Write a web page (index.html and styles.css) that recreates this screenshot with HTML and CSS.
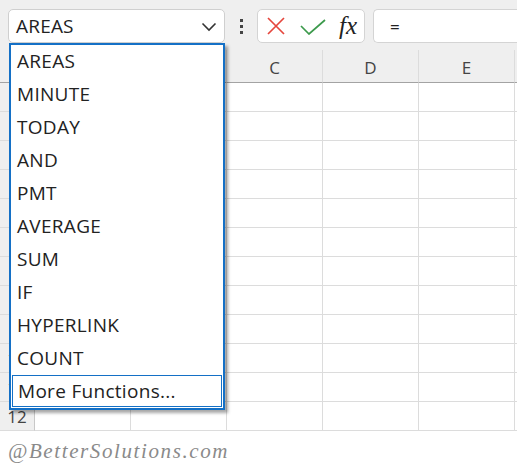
FILE: index.html
```html
<!DOCTYPE html>
<html>
<head>
<meta charset="utf-8">
<link rel="stylesheet" href="styles.css">
</head>
<body>
<div class="page">
  <div class="toolbar">
    <div class="namebox">
      <span class="name">AREAS</span>
      <svg class="chev" width="16" height="10" viewBox="0 0 16 10"><path d="M1.5 1.5 L8 8 L14.5 1.5" fill="none" stroke="#333" stroke-width="1.6"/></svg>
    </div>
    <div class="dots"><span></span><span></span><span></span></div>
    <div class="fbtns">
      <svg class="ico-x" width="20" height="20" viewBox="0 0 20 20"><path d="M2 2 L18 18 M18 2 L2 18" stroke="#e5463d" stroke-width="1.7" fill="none"/></svg>
      <svg class="ico-ok" width="26" height="16" viewBox="0 0 26 16"><path d="M1 7 L9 15 L25 1" stroke="#3c9a4c" stroke-width="1.7" fill="none"/></svg>
      <span class="fx">fx</span>
    </div>
    <div class="fbar"><span class="eq">=</span></div>
  </div>

  <div class="grid">
    <div class="hc corner"></div><div class="hc">A</div><div class="hc">B</div><div class="hc">C</div><div class="hc">D</div><div class="hc">E</div><div class="hc"></div>
    <div class="rh">1</div><div class="c"></div><div class="c"></div><div class="c"></div><div class="c"></div><div class="c"></div><div class="c"></div>
    <div class="rh">2</div><div class="c"></div><div class="c"></div><div class="c"></div><div class="c"></div><div class="c"></div><div class="c"></div>
    <div class="rh">3</div><div class="c"></div><div class="c"></div><div class="c"></div><div class="c"></div><div class="c"></div><div class="c"></div>
    <div class="rh">4</div><div class="c"></div><div class="c"></div><div class="c"></div><div class="c"></div><div class="c"></div><div class="c"></div>
    <div class="rh">5</div><div class="c"></div><div class="c"></div><div class="c"></div><div class="c"></div><div class="c"></div><div class="c"></div>
    <div class="rh">6</div><div class="c"></div><div class="c"></div><div class="c"></div><div class="c"></div><div class="c"></div><div class="c"></div>
    <div class="rh">7</div><div class="c"></div><div class="c"></div><div class="c"></div><div class="c"></div><div class="c"></div><div class="c"></div>
    <div class="rh">8</div><div class="c"></div><div class="c"></div><div class="c"></div><div class="c"></div><div class="c"></div><div class="c"></div>
    <div class="rh">9</div><div class="c"></div><div class="c"></div><div class="c"></div><div class="c"></div><div class="c"></div><div class="c"></div>
    <div class="rh">10</div><div class="c"></div><div class="c"></div><div class="c"></div><div class="c"></div><div class="c"></div><div class="c"></div>
    <div class="rh">11</div><div class="c"></div><div class="c"></div><div class="c"></div><div class="c"></div><div class="c"></div><div class="c"></div>
    <div class="rh">12</div><div class="c"></div><div class="c"></div><div class="c"></div><div class="c"></div><div class="c"></div><div class="c"></div>
  </div>

  <div class="watermark">@BetterSolutions.com</div>

  <ul class="dropdown">
    <li>AREAS</li>
    <li>MINUTE</li>
    <li>TODAY</li>
    <li>AND</li>
    <li>PMT</li>
    <li>AVERAGE</li>
    <li>SUM</li>
    <li>IF</li>
    <li>HYPERLINK</li>
    <li>COUNT</li>
    <li class="more">More Functions...</li>
  </ul>
</div>
</body>
</html>
```

FILE: styles.css
```css
* { box-sizing: border-box; }
html, body { margin: 0; padding: 0; }
body {
  width: 517px;
  height: 465px;
  overflow: hidden;
  background: #fff;
  font-family: "Open Sans", "Noto Sans", sans-serif;
  color: #222;
}
.page { position: relative; width: 517px; height: 465px; overflow: hidden; }

.toolbar {
  height: 50px;
  background: #efefef;
  display: flex;
  align-items: flex-start;
  padding: 9px 0 0 8px;
}
.namebox {
  width: 217px;
  height: 34px;
  background: #fff;
  border: 1px solid #cfcfcf;
  border-radius: 5px;
  display: flex;
  align-items: center;
  justify-content: space-between;
  padding: 0 7px 0 7px;
}
.name { font-size: 19px; line-height: 1; color: #222; letter-spacing: 0.2px; }
.chev { margin-top: 1px; }
.dots {
  width: 32px;
  height: 34px;
  display: flex;
  flex-direction: column;
  align-items: center;
  justify-content: center;
  gap: 3px;
}
.dots span { width: 3px; height: 3px; background: #444; display: block; }
.fbtns {
  width: 108px;
  height: 34px;
  background: #fff;
  border: 1px solid #d4d4d4;
  border-radius: 5px;
  display: flex;
  align-items: center;
  padding-left: 8px;
}
.ico-x { margin-right: 14px; }
.ico-ok { margin-right: 13px; margin-top: 1px; }
.fx {
  font-family: "Liberation Serif", "DejaVu Serif", serif;
  font-style: italic;
  font-size: 25px;
  line-height: 1;
  color: #222;
  margin-top: -2px;
}
.fbar {
  margin-left: 8px;
  flex: 1;
  height: 34px;
  background: #fff;
  border: 1px solid #d4d4d4;
  border-right: none;
  border-radius: 5px 0 0 5px;
  display: flex;
  align-items: center;
  padding-left: 16px;
}
.eq { font-size: 17px; color: #222; }

.grid {
  display: grid;
  grid-template-columns: 35px repeat(6, 96px);
  grid-template-rows: 33px repeat(12, 29px);
  width: 517px;
  overflow: hidden;
}
.hc {
  background: #efefef;
  border-bottom: 1px solid #a3a3a3;
  border-right: 1px solid #dcdcdc;
  font-size: 17px;
  color: #444;
  display: flex;
  align-items: center;
  justify-content: center;
  padding-top: 3px;
}
.corner { border-right: 1px solid #d0d0d0; }
.rh {
  background: #efefef;
  border-right: 1px solid #c8c8c8;
  border-bottom: 1px solid #dcdcdc;
  font-size: 17px;
  color: #444;
  display: flex;
  align-items: center;
  justify-content: center;
}
.c {
  border-right: 1px solid #dcdcdc;
  border-bottom: 1px solid #dcdcdc;
}

.watermark {
  padding: 8px 0 0 8px;
  font-family: "Liberation Serif", "DejaVu Serif", serif;
  font-style: italic;
  font-size: 21px;
  letter-spacing: 1.6px;
  color: #8a8a8a;
}

.dropdown {
  position: absolute;
  left: 9px;
  top: 43px;
  width: 216px;
  margin: 0;
  padding: 0;
  list-style: none;
  background: #fff;
  border: 2px solid #1470c6;
  box-shadow: 3px 3px 3px rgba(0, 0, 0, 0.35);
}
.dropdown li {
  height: 33px;
  font-size: 19px;
  line-height: 33px;
  padding-left: 6px;
  color: #222;
  white-space: nowrap;
  letter-spacing: 0.3px;
}
.dropdown li.more {
  height: 32px;
  line-height: 30px;
  margin: 0 1px 1px 1px;
  border: 1px solid #1470c6;
  padding-left: 5px;
}
```
